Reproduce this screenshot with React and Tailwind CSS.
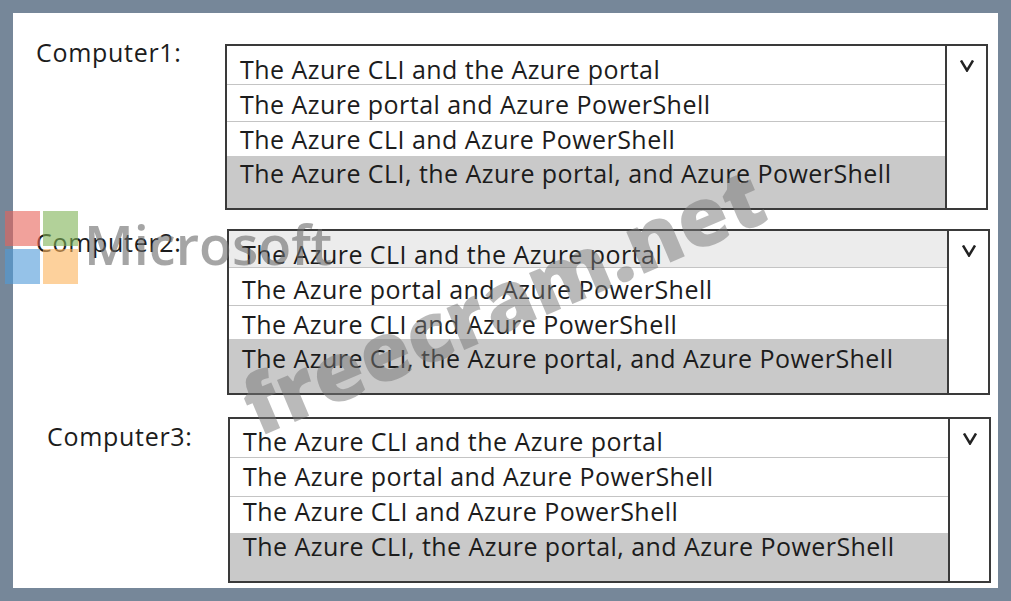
const OPTIONS = [
  "The Azure CLI and the Azure portal",
  "The Azure portal and Azure PowerShell",
  "The Azure CLI and Azure PowerShell",
  "The Azure CLI, the Azure portal, and Azure PowerShell",
];

const Dropdown = ({ rows }) => (
  <div className="flex h-[166px] w-[763px] border-2 border-[#3a3a3a]">
    <div className="flex w-[720px] flex-col border-r-2 border-[#3a3a3a]">
      <div className={`border-b border-[#c4c4c4] pl-[13px] ${rows[0]}`}>{OPTIONS[0]}</div>
      <div className={`border-b border-[#c4c4c4] pl-[13px] ${rows[1]}`}>{OPTIONS[1]}</div>
      <div className={`pl-[13px] ${rows[2]}`}>{OPTIONS[2]}</div>
      <div className={`flex-1 bg-[#c9c9c9] pl-[13px] ${rows[3]}`}>{OPTIONS[3]}</div>
    </div>
    <div className="flex flex-1 justify-center pt-[14px]">
      <svg width="14" height="12" viewBox="0 0 14 12" fill="none" stroke="#222" strokeWidth="2.5">
        <path d="M1 0.5 L7 10.5 L13 0.5" />
      </svg>
    </div>
  </div>
);

const App = () => {
  return (
    <div className="relative h-[601px] w-[1011px] overflow-hidden bg-[#768799] p-[13px] font-['Open_Sans',sans-serif] text-[25px] leading-[26px] tracking-[0.46px] text-[#1c1c1c]">
      <div className="flex h-[575px] w-[985px] flex-col bg-white">
        <div className="ml-[23px] mt-[31px] flex">
          <div className="w-[189px] leading-[16px] tracking-[0.7px]">Computer1:</div>
          <Dropdown rows={["h-[39px] pt-[10px]", "h-[37px] pt-[6px]", "h-[34px] pt-[4px]", "pt-[4px]"]} />
        </div>
        <div className="ml-[23px] mt-[19px] flex">
          <div className="w-[191px] leading-[26px] tracking-[0.7px]">Computer2:</div>
          <Dropdown
            rows={[
              "h-[37px] bg-[#ececec] pt-[10px]",
              "h-[38px] pt-[8px]",
              "h-[33px] pt-[5px]",
              "pt-[6px]",
            ]}
          />
        </div>
        <div className="ml-[34px] mt-[22px] flex">
          <div className="w-[181px] leading-[38px] tracking-[0.7px]">Computer3:</div>
          <Dropdown rows={["h-[39px] pt-[9px]", "h-[39px] pt-[5px]", "h-[36px] pt-[1px]", "pt-[0px]"]} />
        </div>
      </div>

      {/* watermark */}
      <div className="absolute left-[5px] top-[211px] grid grid-cols-[35px_35px] grid-rows-[35px_35px] gap-[3px] opacity-60">
        <div className="bg-[#e8635a]" />
        <div className="bg-[#7fb356]" />
        <div className="bg-[#4f9bd9]" />
        <div className="bg-[#fdb35c]" />
      </div>
      <div className="absolute left-[84px] top-[206px] font-['Open_Sans',sans-serif] text-[54px] font-semibold leading-[76px] tracking-normal text-[#6b6b6b] opacity-60">
        Microsoft
      </div>
      <div className="absolute left-[224px] top-[249px] origin-center -rotate-[23deg] font-['Open_Sans',sans-serif] text-[82px] font-extrabold leading-[100px] tracking-normal text-[#777] opacity-50">
        freecram.net
      </div>
    </div>
  );
};

export default App;
